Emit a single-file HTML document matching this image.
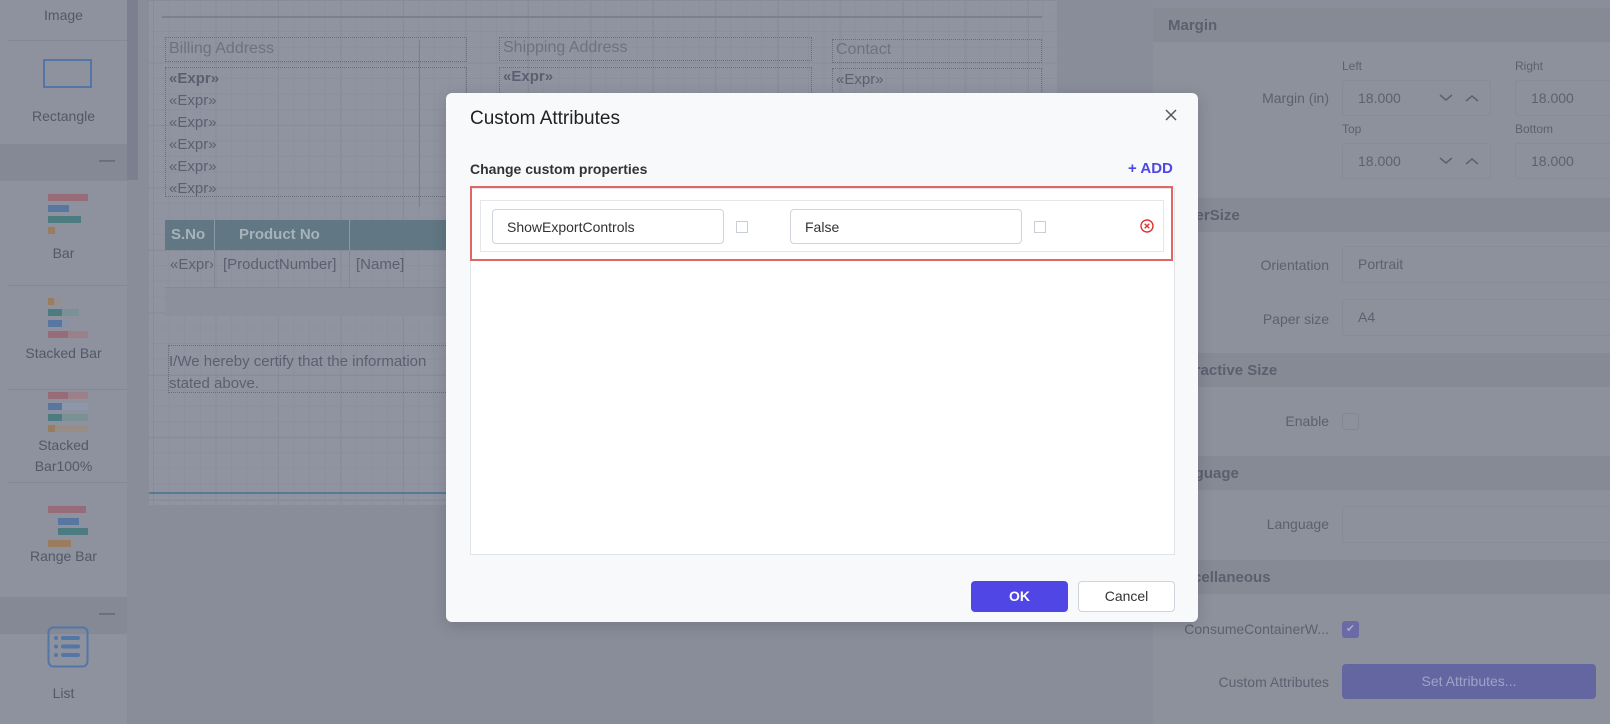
<!DOCTYPE html>
<html><head><meta charset="utf-8"><style>
*{box-sizing:border-box;margin:0;padding:0}
body{width:1610px;height:724px;overflow:hidden;position:relative;background:#888d99;font-family:"Liberation Sans",sans-serif}
.a{position:absolute}
.lp{left:0;top:0;width:127px;height:724px;background:#8d929e}
.lbl{position:absolute;left:0;width:127px;text-align:center;color:#525866;font-size:14px}
.sep{position:absolute;left:7px;width:120px;height:1px;background:#838894}
.band{position:absolute;left:0;width:127px;background:#848995}
.canvas{left:149px;top:0;width:908px;height:505px;background-color:#8f94a0;
background-image:linear-gradient(#878c98 1px,transparent 1px),linear-gradient(90deg,#878c98 1px,transparent 1px),linear-gradient(#8b909c 1px,transparent 1px),linear-gradient(90deg,#8b909c 1px,transparent 1px);
background-size:62.5px 62.5px,62.5px 62.5px,15.6px 15.6px,15.6px 15.6px;background-position:4px 0,4px 0,4px 0,4px 0}
.dot{border:1px dotted #686e7e}
.ct{color:#5a6070;font-size:15px}
.rp{left:1153px;top:0;width:457px;height:724px;background:#8d919c}
.rh{position:absolute;left:0;width:457px;height:34px;background:#858a95;color:#5a606e;font-size:15px;font-weight:bold;padding:9px 0 0 15px}
.rl{position:absolute;width:176px;text-align:right;color:#5b616f;font-size:14px}
.in{position:absolute;border:1px solid #878b96;border-radius:3px;background:#8d919c;color:#5b616f;font-size:14px;padding:9px 15px}
.dlg{left:446px;top:93px;width:752px;height:529px;background:#f8f9fb;border-radius:6px;box-shadow:0 4px 16px rgba(0,0,0,.15)}
.fi{position:absolute;top:8px;width:232px;height:35px;border:1px solid #cfd3da;border-radius:4px;background:#fff;font-size:14px;color:#333;padding:9px 14px}
.cb{position:absolute;top:20px;width:12px;height:12px;border:1px solid #c9cdd4;background:#fff}
.b{position:absolute;height:7px}
</style></head><body>
<div class="a lp">
 <div class="lbl" style="top:7px">Image</div>
 <div class="sep" style="top:40px"></div>
 <div class="a" style="left:43px;top:59px;width:49px;height:29px;border:2px solid #5277a6"></div>
 <div class="lbl" style="top:108px">Rectangle</div>
 <div class="band" style="top:144px;height:37px"><span class="a" style="left:99px;top:8px;color:#555b68">—</span></div>
 <div class="b" style="left:48px;top:194px;width:40px;background:#986b78"></div>
 <div class="b" style="left:48px;top:205px;width:21px;background:#5776a0"></div>
 <div class="b" style="left:48px;top:216px;width:33px;background:#4c7c80"></div>
 <div class="b" style="left:48px;top:227px;width:7px;background:#9a7c5e"></div>
 <div class="lbl" style="top:245px">Bar</div>
 <div class="sep" style="top:285px"></div>
 <div class="b" style="left:48px;top:298px;width:6px;background:#9a7c5e"></div><div class="b" style="left:54px;top:298px;width:7px;background:#958f8f"></div>
 <div class="b" style="left:48px;top:309px;width:14px;background:#4c7c80"></div><div class="b" style="left:62px;top:309px;width:17px;background:#7a9195"></div>
 <div class="b" style="left:48px;top:320px;width:14px;background:#5776a0"></div><div class="b" style="left:62px;top:320px;width:8px;background:#8792a8"></div>
 <div class="b" style="left:48px;top:331px;width:20px;background:#986b78"></div><div class="b" style="left:68px;top:331px;width:20px;background:#9c8089"></div>
 <div class="lbl" style="top:345px">Stacked Bar</div>
 <div class="sep" style="top:389px"></div>
 <div class="b" style="left:48px;top:392px;width:20px;background:#986b78"></div><div class="b" style="left:68px;top:392px;width:20px;background:#9c8089"></div>
 <div class="b" style="left:48px;top:403px;width:14px;background:#5776a0"></div><div class="b" style="left:62px;top:403px;width:26px;background:#8c97ab"></div>
 <div class="b" style="left:48px;top:414px;width:14px;background:#4c7c80"></div><div class="b" style="left:62px;top:414px;width:26px;background:#7a9195"></div>
 <div class="b" style="left:48px;top:425px;width:7px;background:#9a7c5e"></div><div class="b" style="left:55px;top:425px;width:33px;background:#988c86"></div>
 <div class="lbl" style="top:435px;line-height:21px">Stacked<br>Bar100%</div>
 <div class="sep" style="top:482px"></div>
 <div class="b" style="left:48px;top:506px;width:38px;background:#986b78"></div>
 <div class="b" style="left:58px;top:518px;width:21px;background:#5776a0"></div>
 <div class="b" style="left:58px;top:528px;width:30px;background:#4c7c80"></div>
 <div class="b" style="left:48px;top:540px;width:23px;background:#9a7c5e"></div>
 <div class="lbl" style="top:548px">Range Bar</div>
 <div class="band" style="top:597px;height:37px"><span class="a" style="left:99px;top:8px;color:#555b68">—</span></div>
 <svg class="a" style="left:47px;top:626px" width="42" height="42" viewBox="0 0 42 42"><rect x="1.5" y="1.5" width="39" height="39" rx="5" fill="none" stroke="#5277a6" stroke-width="2"/><g fill="#5277a6"><circle cx="9" cy="12" r="2"/><circle cx="9" cy="20.5" r="2"/><circle cx="9" cy="29" r="2"/><rect x="14" y="10" width="19" height="4" rx="2"/><rect x="14" y="18.5" width="19" height="4" rx="2"/><rect x="14" y="27" width="19" height="4" rx="2"/></g></svg>
 <div class="lbl" style="top:685px">List</div>
</div>
<div class="a" style="left:127px;top:0;width:11px;height:180px;background:#7a808f"></div>
<div class="a canvas">
 <div class="a" style="left:13px;top:16px;width:880px;height:2px;background:#7b808e"></div>
 <div class="a dot ct" style="left:16px;top:37px;width:302px;height:25px;padding:2px 3px;color:#6c7280;font-size:16px">Billing Address</div>
 <div class="a" style="left:270px;top:40px;width:1px;height:167px;background:#7b808e"></div>
 <div class="a dot ct" style="left:16px;top:67px;width:302px;height:130px;padding:0 3px;line-height:22px;overflow:hidden"><b>«Expr»</b><br>«Expr»<br>«Expr»<br>«Expr»<br>«Expr»<br>«Expr»</div>
 <div class="a dot ct" style="left:350px;top:37px;width:313px;height:24px;padding:1px 3px;color:#6c7280;font-size:16px">Shipping Address</div>
 <div class="a dot ct" style="left:350px;top:67px;width:313px;height:30px;padding:0 3px"><b>«Expr»</b></div>
 <div class="a dot ct" style="left:683px;top:39px;width:210px;height:24px;padding:1px 3px;color:#6c7280;font-size:16px">Contact</div>
 <div class="a dot ct" style="left:683px;top:68px;width:210px;height:30px;padding:2px 3px">«Expr»</div>
 <div class="a" style="left:16px;top:220px;width:290px;height:30px;background:#617783;color:#a6b3bb;font-weight:bold;font-size:15px">
  <span class="a" style="left:6px;top:6px">S.No</span><span class="a" style="left:49px;top:0;width:1px;height:30px;background:#8a9aa3"></span>
  <span class="a" style="left:74px;top:6px">Product No</span><span class="a" style="left:184px;top:0;width:1px;height:30px;background:#8a9aa3"></span>
  <span class="a" style="left:284px;top:6px">P</span></div>
 <div class="a ct" style="left:16px;top:250px;width:290px;height:38px;border-bottom:1px solid #838894">
  <span class="a" style="left:5px;top:6px;width:43px;overflow:hidden;white-space:nowrap">«Expr»</span><span class="a" style="left:49px;top:0;width:1px;height:38px;background:#838894"></span>
  <span class="a" style="left:58px;top:6px">[ProductNumber]</span><span class="a" style="left:184px;top:0;width:1px;height:38px;background:#838894"></span>
  <span class="a" style="left:191px;top:6px">[Name]</span></div>
 <div class="a" style="left:16px;top:288px;width:290px;height:28px;background:#8b909c"></div>
 <div class="a dot ct" style="left:19px;top:345px;width:290px;height:48px;padding:5px 2px 0 0;line-height:22px;border-right:none">I/We hereby certify that the information<br>stated above.</div>
 <div class="a" style="left:0;top:492px;width:896px;height:2px;background:#557a96"></div>
</div>
<div class="a rp">
 <div class="a" style="left:0;top:0;width:457px;height:8px;background:#8a8e9a"></div>
 <div class="rh" style="top:8px">Margin</div>
 <div class="rl" style="top:90px">Margin (in)</div>
 <div class="a" style="left:189px;top:59px;color:#5b616f;font-size:12px">Left</div>
 <div class="a" style="left:362px;top:59px;color:#5b616f;font-size:12px">Right</div>
 <div class="in" style="left:189px;top:80px;width:149px;height:36px">18.000<svg class="a" style="left:96px;top:12px" width="40" height="10"><path d="M1 2l6 5 6-5M27 8l6-5 6 5" fill="none" stroke="#5b616f" stroke-width="1.5"/></svg></div>
 <div class="in" style="left:362px;top:80px;width:100px;height:36px">18.000</div>
 <div class="a" style="left:189px;top:122px;color:#5b616f;font-size:12px">Top</div>
 <div class="a" style="left:362px;top:122px;color:#5b616f;font-size:12px">Bottom</div>
 <div class="in" style="left:189px;top:143px;width:149px;height:36px">18.000<svg class="a" style="left:96px;top:12px" width="40" height="10"><path d="M1 2l6 5 6-5M27 8l6-5 6 5" fill="none" stroke="#5b616f" stroke-width="1.5"/></svg></div>
 <div class="in" style="left:362px;top:143px;width:100px;height:36px">18.000</div>
 <div class="rh" style="top:198px">PaperSize</div>
 <div class="rl" style="top:257px">Orientation</div>
 <div class="in" style="left:189px;top:246px;width:280px;height:37px">Portrait</div>
 <div class="rl" style="top:311px">Paper size</div>
 <div class="in" style="left:189px;top:299px;width:280px;height:37px">A4</div>
 <div class="rh" style="top:353px">Interactive Size</div>
 <div class="rl" style="top:413px">Enable</div>
 <div class="a" style="left:189px;top:413px;width:17px;height:17px;border:1px solid #838793;border-radius:3px"></div>
 <div class="rh" style="top:456px">Language</div>
 <div class="rl" style="top:516px">Language</div>
 <div class="in" style="left:189px;top:506px;width:280px;height:37px"></div>
 <div class="rh" style="top:560px">Miscellaneous</div>
 <div class="rl" style="top:621px">ConsumeContainerW...</div>
 <div class="a" style="left:189px;top:621px;width:17px;height:17px;background:#6a6ba6;border-radius:3px;color:#a9abd0;font-size:11px;text-align:center;line-height:17px">✔</div>
 <div class="rl" style="top:674px">Custom Attributes</div>
 <div class="a" style="left:189px;top:664px;width:254px;height:35px;background:#6366a0;border-radius:4px;color:#9ea3c8;font-size:14px;text-align:center;line-height:35px">Set Attributes...</div>
</div>
<div class="a dlg">
 <div class="a" style="left:24px;top:15px;font-size:19px;color:#222">Custom Attributes</div>
 <svg class="a" style="left:719px;top:16px" width="12" height="12"><path d="M1 1l10 10M11 1L1 11" stroke="#555" stroke-width="1.5"/></svg>
 <div class="a" style="left:24px;top:68px;font-size:14px;font-weight:bold;color:#333">Change custom properties</div>
 <div class="a" style="left:682px;top:67px;font-size:15px;font-weight:bold;color:#4f46e5">+ ADD</div>
 <div class="a" style="left:24px;top:95px;width:705px;height:367px;background:#fff;border:1px solid #e1e4e9"></div>
 <div class="a" style="left:24px;top:93px;width:703px;height:75px;border:2px solid #e06666"></div>
 <div class="a" style="left:34px;top:107px;width:684px;height:52px;border:1px solid #e3e6ea;background:#fff">
  <div class="fi" style="left:11px">ShowExportControls</div>
  <div class="cb" style="left:255px"></div>
  <div class="fi" style="left:309px">False</div>
  <div class="cb" style="left:553px"></div>
  <svg class="a" style="left:659px;top:18px" width="14" height="14"><circle cx="7" cy="7" r="6" fill="none" stroke="#e03131" stroke-width="1.4"/><path d="M4.7 4.7l4.6 4.6M9.3 4.7L4.7 9.3" stroke="#e03131" stroke-width="1.4"/></svg>
 </div>
 <div class="a" style="left:525px;top:488px;width:97px;height:31px;background:#4f46e5;border-radius:4px;color:#fff;font-weight:bold;font-size:14px;text-align:center;line-height:31px">OK</div>
 <div class="a" style="left:632px;top:488px;width:97px;height:31px;background:#fff;border:1px solid #cfd3da;border-radius:4px;color:#333;font-size:14px;text-align:center;line-height:29px">Cancel</div>
</div>
</body></html>
